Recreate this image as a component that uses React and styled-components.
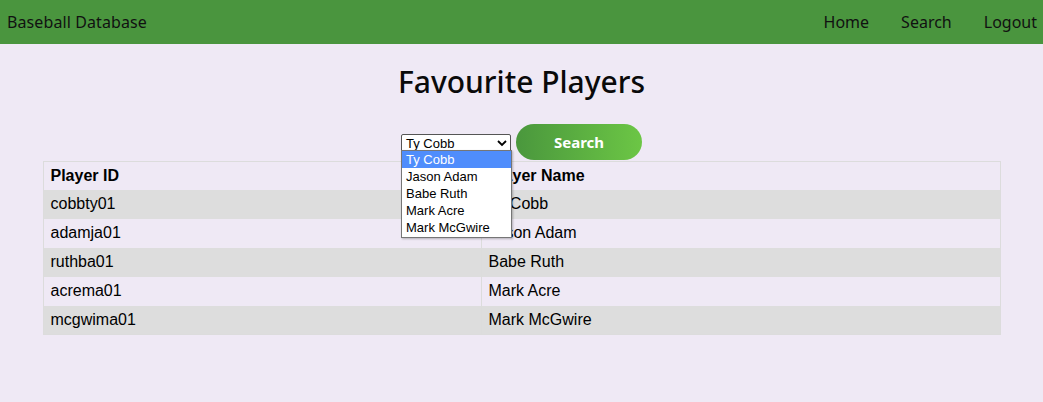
import React from "react";
import styled, { createGlobalStyle } from "styled-components";

const Global = createGlobalStyle`
  html, body { margin: 0; padding: 0; }
  body {
    background: #efe9f5;
    font-family: "Liberation Sans", Arial, sans-serif;
    color: #000;
  }
`;

const NavBar = styled.nav`
  height: 44px;
  background: #4a953e;
  display: flex;
  align-items: center;
  justify-content: space-between;
  padding: 0 6px 0 7px;
  font-family: "Noto Sans", "Open Sans", sans-serif;
  font-size: 16px;
  color: #111;
`;

const Brand = styled.div`
  letter-spacing: 0.1px;
`;

const Links = styled.div`
  display: flex;
  gap: 32px;
`;

const NavLink = styled.a`
  color: #111;
  text-decoration: none;
`;

const Main = styled.main`
  display: flex;
  flex-direction: column;
  align-items: center;
`;

const Title = styled.h1`
  margin: 18px 0 22px;
  font-family: "Noto Sans", "Open Sans", sans-serif;
  font-weight: 500;
  font-size: 30px;
  line-height: 40px;
  color: #0a0a0a;
`;

const Controls = styled.div`
  display: flex;
  align-items: center;
  gap: 5px;
`;

const SelectWrap = styled.div`
  position: relative;
  margin-top: 2px;
`;

const SelectBox = styled.div`
  box-sizing: border-box;
  width: 110px;
  height: 18px;
  border: 1px solid #555;
  border-radius: 2px;
  background: #fff;
  display: flex;
  align-items: center;
  justify-content: space-between;
  padding: 0 3px 0 4px;
  font-size: 13px;
  color: #000;
`;

const Chevron = styled.svg`
  width: 10px;
  height: 8px;
`;

const DropList = styled.ul`
  position: absolute;
  top: 16px;
  left: 0;
  box-sizing: border-box;
  width: 111px;
  margin: 0;
  padding: 0 0 1px;
  list-style: none;
  background: #fff;
  border: 1px solid #767676;
  box-shadow: 1px 1px 2px rgba(0,0,0,0.25);
  z-index: 5;
`;

const Option = styled.li`
  height: 17px;
  line-height: 17px;
  padding: 0 4px;
  font-size: 13px;
  color: ${(p) => (p.$active ? "#fff" : "#000")};
  background: ${(p) => (p.$active ? "#4f8dfc" : "transparent")};
`;

const SearchButton = styled.button`
  width: 126px;
  height: 36px;
  border: none;
  border-radius: 18px;
  background: linear-gradient(90deg, #4a973d 0%, #6cc645 100%);
  color: #fff;
  font-family: "Noto Sans", "Open Sans", sans-serif;
  font-weight: 700;
  font-size: 15px;
  cursor: pointer;
`;

const Table = styled.table`
  width: 958px;
  margin-top: 1px;
  border-collapse: collapse;
  border: 1px solid #dcdcdc;
  font-size: 16px;
`;

const Row = styled.tr`
  background: ${(p) => (p.$shaded ? "#dddddd" : "transparent")};
`;

const HeadCell = styled.th`
  text-align: left;
  font-weight: 700;
  height: 28px;
  padding: 0 7px;
  border-right: 1px solid #dcdcdc;
  width: ${(p) => p.$w || "auto"};
  box-sizing: border-box;
`;

const Cell = styled.td`
  height: 29px;
  padding: 0 7px;
  border-right: 1px solid #dcdcdc;
  box-sizing: border-box;
`;

const players = [
  ["cobbty01", "Ty Cobb"],
  ["adamja01", "Jason Adam"],
  ["ruthba01", "Babe Ruth"],
  ["acrema01", "Mark Acre"],
  ["mcgwima01", "Mark McGwire"],
];

export default function App() {
  return (
    <>
      <Global />
      <NavBar>
        <Brand>Baseball Database</Brand>
        <Links>
          <NavLink href="#">Home</NavLink>
          <NavLink href="#">Search</NavLink>
          <NavLink href="#">Logout</NavLink>
        </Links>
      </NavBar>
      <Main>
        <Title>Favourite Players</Title>
        <Controls>
          <SelectWrap>
            <SelectBox>
              <span>Ty Cobb</span>
              <Chevron viewBox="0 0 10 8">
                <path d="M1 2 L5 6 L9 2" fill="none" stroke="#000" strokeWidth="1.8" />
              </Chevron>
            </SelectBox>
            <DropList>
              {players.map(([, name], i) => (
                <Option key={name} $active={i === 0}>{name}</Option>
              ))}
            </DropList>
          </SelectWrap>
          <SearchButton>Search</SearchButton>
        </Controls>
        <Table>
          <tbody>
            <Row>
              <HeadCell $w="438px">Player ID</HeadCell>
              <HeadCell>Player Name</HeadCell>
            </Row>
            {players.map(([id, name], i) => (
              <Row key={id} $shaded={i % 2 === 0}>
                <Cell>{id}</Cell>
                <Cell>{name}</Cell>
              </Row>
            ))}
          </tbody>
        </Table>
      </Main>
    </>
  );
}
